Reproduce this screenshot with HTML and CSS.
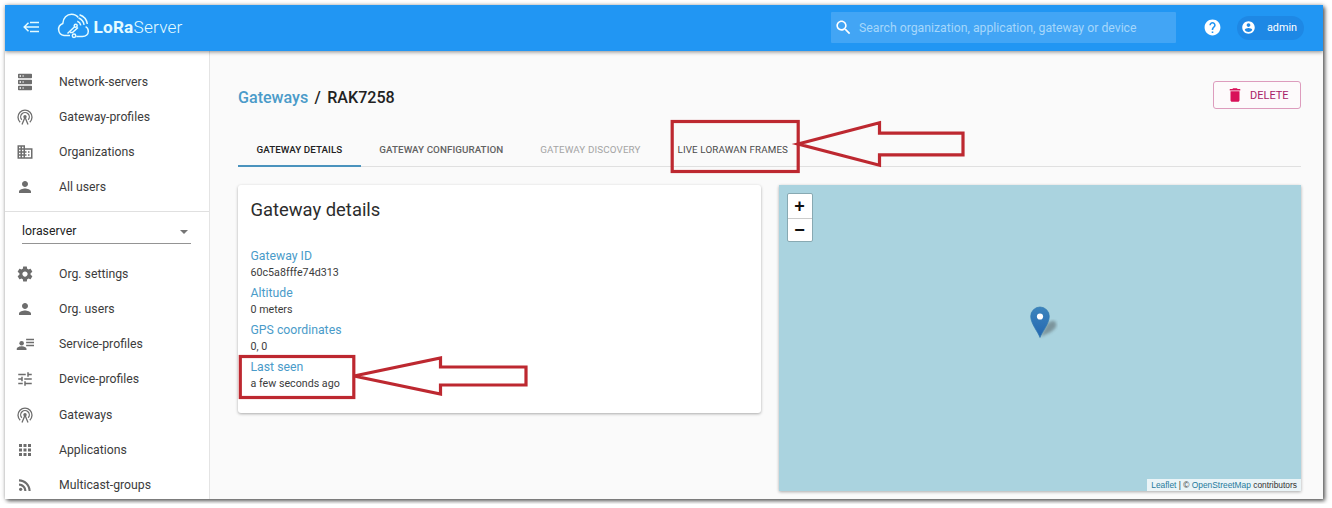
FILE: index.html
```html
<!DOCTYPE html>
<html lang="en">
<head>
<meta charset="utf-8">
<title>LoRa Server</title>
<link rel="stylesheet" href="styles.css">
</head>
<body>
<svg class="defs" width="0" height="0" aria-hidden="true">
  <symbol id="server" viewBox="0 0 18 18"><path fill-rule="evenodd" d="M2.8.7h12.4q.8 0 .8.8v3q0 .8-.8.8H2.800q-.8 0-.8-.8v-3q0-.8.8-.8zM3.600 2.300v1.500h1.400V2.300zM6.600 2.300v1.500h1V2.300zM2.800 6.700h12.400q.8 0 .8.8v3q0 .8-.8.8H2.800q-.8 0-.8-.8v-3q0-.8.8-.8zM3.600 8.300v1.500h1.400V8.300zM6.600 8.300v1.500h1V8.300zM2.800 12.700h12.400q.8 0 .8.8v3q0 .8-.8.8H2.800q-.8 0-.8-.8v-3q0-.8.8-.8zM3.600 14.300v1.500h1.400v-1.500zM6.600 14.300v1.500h1v-1.500z"/></symbol>
  <symbol id="antenna" viewBox="0 0 18 18"><g fill="none" stroke="currentColor" stroke-width="1.300"><path d="M4.200 14.200A7 7 0 1 1 13.800 14.200M5.800 11.800A4.300 4.300 0 1 1 12.200 11.800M6 16.500L9 9.300l3 7.200"/></g><circle cx="9" cy="8.800" r="1.700"/></symbol>
  <symbol id="building" viewBox="0 0 24 24"><path d="M12 7V3H2v18h20V7H12zM6 19H4v-2h2v2zm0-4H4v-2h2v2zm0-4H4V9h2v2zm0-4H4V5h2v2zm4 12H8v-2h2v2zm0-4H8v-2h2v2zm0-4H8V9h2v2zm0-4H8V5h2v2zm10 12h-8v-2h2v-2h-2v-2h2v-2h-2V9h8v10zm-2-8h-2v2h2v-2zm0 4h-2v2h2v-2z"/></symbol>
  <symbol id="person" viewBox="0 0 24 24"><path d="M12 12c2.210 0 4-1.790 4-4s-1.790-4-4-4-4 1.790-4 4 1.790 4 4 4zm0 2c-2.670 0-8 1.340-8 4v2h16v-2c0-2.660-5.330-4-8-4z"/></symbol>
  <symbol id="gear" viewBox="0 0 24 24"><path d="M19.430 12.980c.04-.32.07-.64.07-.98s-.03-.66-.07-.98l2.110-1.650c.19-.15.24-.42.12-.64l-2-3.460c-.12-.22-.39-.3-.61-.22l-2.490 1c-.52-.4-1.080-.73-1.690-.98l-.38-2.650C14.460 2.180 14.250 2 14 2h-4c-.25 0-.46.18-.49.42l-.38 2.650c-.61.25-1.170.59-1.690.98l-2.490-1c-.23-.09-.49 0-.61.22l-2 3.460c-.13.22-.07.49.12.64l2.110 1.650c-.04.32-.07.65-.07.98s.03.66.07.98l-2.110 1.650c-.19.15-.24.42-.12.64l2 3.460c.12.22.39.3.61.22l2.490-1c.52.4 1.080.73 1.690.98l.38 2.650c.03.24.24.42.49.42h4c.25 0 .46-.18.49-.42l.38-2.650c.61-.25 1.170-.59 1.690-.98l2.490 1c.23.09.49 0 .61-.22l2-3.460c.12-.22.07-.49-.12-.64l-2.110-1.650zM12 15.500c-1.930 0-3.500-1.570-3.500-3.500s1.570-3.500 3.500-3.500 3.500 1.570 3.500 3.500-1.570 3.500-3.500 3.500z"/></symbol>
  <symbol id="contact" viewBox="0 0 24 24"><circle cx="7.500" cy="11" r="3"/><path d="M1 20v-1.700c0-2.100 4.300-3.300 6.500-3.300s6.500 1.200 6.500 3.300V20zM13.500 5H24v2H13.500zM13.500 9H24v2H13.500zM13.500 13H24v2H13.500z"/></symbol>
  <symbol id="tune" viewBox="0 0 24 24"><path d="M3 17v2h6v-2H3zM3 5v2h10V5H3zm10 16v-2h8v-2h-8v-2h-2v6h2zM7 9v2H3v2h4v2h2V9H7zm14 4v-2H11v2h10zm-6-4h2V7h4V5h-4V3h-2v6z"/></symbol>
  <symbol id="apps" viewBox="0 0 24 24"><path d="M4 8h4V4H4v4zm6 12h4v-4h-4v4zm-6 0h4v-4H4v4zm0-6h4v-4H4v4zm6 0h4v-4h-4v4zm6-10v4h4V4h-4zm-6 4h4V4h-4v4zm6 6h4v-4h-4v4zm0 6h4v-4h-4v4z"/></symbol>
  <symbol id="feed" viewBox="0 0 24 24"><circle cx="6.180" cy="17.820" r="2.180"/><path d="M4 4.440v2.830c7.030 0 12.730 5.700 12.730 12.730h2.830c0-8.590-6.970-15.560-15.560-15.560zm0 5.660v2.830c3.900 0 7.070 3.170 7.070 7.070h2.830c0-5.470-4.430-9.900-9.900-9.900z"/></symbol>
</svg>

<div class="window">
  <header class="topbar">
    <svg class="collapse" viewBox="0 0 16 12"><path d="M7 1.500h9M5 6h11M7 10.500h9M5.500 1.800L1.200 6l4.300 4.200M1.200 6H7" fill="none" stroke="currentColor" stroke-width="1.500"/></svg>
    <svg class="cloud" viewBox="0 0 34 26" fill="none" stroke="currentColor" stroke-width="1.500">
      <path d="M14 22.500H8A6.200 6.200 0 0 1 6.800 10.500C7 5 11 1.300 15.500 1.300c3 0 5.300 1.200 6.800 3.200M20.300 23.500h6c3.800 0 6-2.400 6-5.200 0-2-1-3.800-2.700-4.700"/>
      <path d="M23.500 1.700c4.400 1.500 7.300 5 7.800 9.300M22.600 5c3 1.200 5 3.400 5.500 6.800M21.300 8.300c2 .7 3.100 2 3.500 4"/>
      <circle cx="19.700" cy="12.700" r="1.500"/><circle cx="18" cy="22.800" r="1.700"/><path d="M18.600 13.800L11.500 20.500M14 19.500h2.500l5.500-5"/>
    </svg>
    <div class="brand"><b>LoRa</b><span>Server</span></div>
    <div class="search">
      <svg viewBox="0 0 24 24"><path d="M15.500 14h-.79l-.28-.27C15.410 12.590 16 11.110 16 9.500 16 5.910 13.090 3 9.500 3S3 5.910 3 9.500 5.910 16 9.500 16c1.610 0 3.090-.59 4.230-1.570l.27.28v.79l5 4.990L20.490 19l-4.990-5zm-6 0C7.010 14 5 11.990 5 9.500S7.010 5 9.500 5 14 7.010 14 9.500 11.990 14 9.500 14z"/></svg>
      <span>Search organization, application, gateway or device</span>
    </div>
    <svg class="help" viewBox="0 0 24 24"><path d="M12 2C6.480 2 2 6.480 2 12s4.480 10 10 10 10-4.480 10-10S17.520 2 12 2zm1 17h-2v-2h2v2zm2.070-7.750l-.9.920C13.450 12.900 13 13.500 13 15h-2v-.5c0-1.100.45-2.100 1.170-2.830l1.240-1.260c.37-.36.59-.86.59-1.410 0-1.100-.9-2-2-2s-2 .9-2 2H8c0-2.210 1.790-4 4-4s4 1.790 4 4c0 .88-.36 1.680-.93 2.250z"/></svg>
    <div class="chip">
      <svg viewBox="0 0 24 24"><path d="M12 2C6.480 2 2 6.480 2 12s4.480 10 10 10 10-4.480 10-10S17.520 2 12 2zm0 3c1.660 0 3 1.340 3 3s-1.340 3-3 3-3-1.340-3-3 1.340-3 3-3zm0 14.200c-2.500 0-4.710-1.280-6-3.220.03-1.990 4-3.080 6-3.080 1.990 0 5.970 1.090 6 3.080-1.290 1.940-3.500 3.220-6 3.220z"/></svg>
      <span>admin</span>
    </div>
  </header>

  <div class="body">
    <nav class="sidebar">
      <div class="group">
        <a><svg><use href="#server"/></svg>Network-servers</a>
        <a><svg><use href="#antenna"/></svg>Gateway-profiles</a>
        <a><svg><use href="#building"/></svg>Organizations</a>
        <a><svg><use href="#person"/></svg>All users</a>
      </div>
      <div class="org"><div class="select"><span>loraserver</span><i></i></div></div>
      <div class="group">
        <a><svg><use href="#gear"/></svg>Org. settings</a>
        <a><svg><use href="#person"/></svg>Org. users</a>
        <a><svg><use href="#contact"/></svg>Service-profiles</a>
        <a><svg><use href="#tune"/></svg>Device-profiles</a>
        <a><svg><use href="#antenna"/></svg>Gateways</a>
        <a><svg><use href="#apps"/></svg>Applications</a>
        <a><svg><use href="#feed"/></svg>Multicast-groups</a>
      </div>
    </nav>

    <main class="content">
      <div class="title-row">
        <h1><a>Gateways</a><span class="slash">/</span><span>RAK7258</span></h1>
        <button class="delete"><svg viewBox="0 0 24 24"><path d="M6 19c0 1.100.9 2 2 2h8c1.100 0 2-.9 2-2V7H6v12zM19 4h-3.500l-1-1h-5l-1 1H5v2h14V4z"/></svg>DELETE</button>
      </div>
      <div class="tabs">
        <span class="tab active">GATEWAY DETAILS</span>
        <span class="tab">GATEWAY CONFIGURATION</span>
        <span class="tab disabled">GATEWAY DISCOVERY</span>
        <span class="tab live">LIVE LORAWAN FRAMES</span>
      </div>
      <div class="panels">
        <section class="card">
          <h2>Gateway details</h2>
          <dl>
            <dt>Gateway ID</dt><dd>60c5a8fffe74d313</dd>
            <dt>Altitude</dt><dd>0 meters</dd>
            <dt>GPS coordinates</dt><dd>0, 0</dd>
            <dt>Last seen</dt><dd>a few seconds ago</dd>
          </dl>
        </section>
        <section class="map">
          <div class="zoom"><span>+</span><span>−</span></div>
          <svg class="pin" viewBox="0 0 44 36">
            <defs>
              <linearGradient id="pinFill" x1="0" y1="0" x2="0" y2="1"><stop offset="0" stop-color="#3c84bd"/><stop offset="1" stop-color="#2467b0"/></linearGradient>
              <filter id="soft"><feGaussianBlur stdDeviation="1.800"/></filter>
            </defs>
            <path d="M11 31L18 18q7-6 9-1t-7 10z" fill="#333" opacity=".38" filter="url(#soft)"/>
            <path d="M11 31.500C9 26 1.700 17.500 1.700 10.300a9.300 9.300 0 0 1 18.600 0C20.300 17.500 13 26 11 31.500z" fill="url(#pinFill)" stroke="#3179b0" stroke-width=".7"/>
            <circle cx="11" cy="10.500" r="3.100" fill="#fff"/>
          </svg>
          <div class="credit"><a>Leaflet</a> | © <a>OpenStreetMap</a> contributors</div>
        </section>
      </div>
    </main>
  </div>
</div>

<svg class="marks" viewBox="0 0 1332 508" fill="none" stroke="#bd2830" stroke-width="3.200">
  <rect x="672.200" y="121.500" width="126" height="50"/>
  <path d="M798 144L879.500 122.800V133.200H963V154.800H879.500V165.200z"/>
  <rect x="240.300" y="356.500" width="113.500" height="41"/>
  <path d="M354 376L440.500 358V367H526V385H440.500V394z"/>
</svg>
</body>
</html>
```

FILE: styles.css
```css
* { box-sizing: border-box; }
body { margin: 0; background: #fff; font-family: Roboto, sans-serif; color: #333; overflow: hidden; }
.defs { position: absolute; }
svg { fill: currentColor; flex: none; }

.window {
  width: 1318px; height: 494px; margin: 5px;
  display: flex; flex-direction: column; overflow: hidden;
  background: #fafafa; box-shadow: 2px 2px 4px rgba(0, 0, 0, .6), 0 0 4px rgba(0, 0, 0, .25);
}

.topbar {
  height: 46px; flex: none; display: flex; align-items: center;
  padding: 0 19px 1px 18px; background: #2196f3; color: #e4fbff;
  box-shadow: 0 1px 4px rgba(0, 0, 0, .45); z-index: 1;
}
.collapse { width: 16px; height: 12px; margin-top: -1px; }
.cloud { width: 34px; height: 26px; margin-left: 17px; margin-top: -3px; fill: none; }
.brand { margin-left: 3.500px; font-size: 17.200px; line-height: 20px; letter-spacing: .2px; padding-bottom: 1px; }
.brand span { font-weight: 300; }
.search {
  width: 345px; height: 31px; margin-left: auto; padding-left: 3px;
  display: flex; align-items: center; gap: 7px;
  background: #42a5f5; border-radius: 1px; color: #a5d7fb; font-size: 12.25px;
}
.search svg { width: 19px; height: 19px; margin-right: -1px; color: #fff; }
.help { width: 19px; height: 19px; margin-left: 27px; margin-right: -1px; color: #fff; }
.chip {
  width: 67px; height: 24px; margin-left: 16px; padding-left: 4px; border-radius: 12px;
  display: flex; align-items: center; gap: 11px; background: #1e88e5; color: #fff; font-size: 10.800px;
}
.chip svg { width: 15px; height: 15px; }

.body { flex: 1; min-height: 0; display: flex; }
.sidebar { width: 205px; flex: none; background: #fff; border-right: 1px solid #e4e4e4; padding-top: 13px; }
.group a {
  height: 35.200px; padding-left: 11px; display: flex; align-items: center; gap: 25px;
  font-size: 12.25px; color: #3c3c3c;
}
.group svg { width: 18px; height: 18px; color: #6d6d6d; }
.org { height: 45.500px; margin-top: 6px; border-top: 1px solid #e0e0e0; padding: 6px 18px 0 17px; }
.select {
  height: 26px; border-bottom: 1px solid #949494; padding: 2px 3px 0 0;
  display: flex; align-items: center; justify-content: space-between; font-size: 12.3px; color: #222;
}
.select i { border: 4px solid transparent; border-top-color: #757575; border-bottom: 0; margin-top: 1px; }

.content { flex: 1; padding: 30px 22px 0 28px; }
.title-row { display: flex; justify-content: space-between; align-items: flex-start; height: 52px; }
h1 { margin: 7px 0 0; font-size: 16.100px; line-height: 20px; font-weight: 500; color: #222; }
h1 a { color: #4a9bc9; }
.slash { margin: 0 6.300px; }
.delete {
  width: 88px; height: 28px; padding: 0 0 0 12px; display: flex; align-items: center; gap: 6px;
  border: 1px solid #dd9cbd; border-radius: 3px; background: #fdfafb;
  color: #a92268; font: 400 11px Roboto, sans-serif;
}
.delete svg { width: 18px; height: 18px; color: #d81159; }
.tabs { height: 34px; display: flex; border-bottom: 1px solid #e0e0e0; }
.tab { height: 34px; padding: 0 18.500px; font-size: 9.800px; line-height: 33px; font-weight: 500; letter-spacing: .06px; color: #626262; white-space: nowrap; }
.active { color: #222; border-bottom: 2px solid #4a93bd; }
.disabled { color: #a4a4a4; font-weight: 400; letter-spacing: .13px; }
.live { color: #4a4a4a; font-weight: 400; letter-spacing: .13px; }

.panels { display: grid; grid-template-columns: 1fr 1fr; gap: 18px; margin-top: 18px; align-items: start; }
.card, .map { box-shadow: 0 1px 3px rgba(0, 0, 0, .32); }
.card { height: 228px; padding: 14px 12.500px; background: #fff; border-radius: 3px; }
h2 { margin: 0 0 26px; font-size: 18.400px; line-height: 22px; font-weight: 400; color: #2c2c2c; }
dl { margin: 0; }
dt { font-size: 12.25px; line-height: 19px; color: #4a9bc9; }
dd { margin: 0; font-size: 10.700px; line-height: 14px; padding-bottom: 4px; height: 18.100px; color: #3c3c3c; }

.map { position: relative; height: 306px; background: #aad3df; }
.zoom {
  position: absolute; left: 8px; top: 8px; width: 26px; height: 49px;
  border: 1px solid #88a9b2; border-radius: 2px; background: #fff; overflow: hidden;
}
.zoom span {
  display: block; height: 24px; font: bold 18px/25px "Liberation Sans", sans-serif; text-align: center; color: #111;
}
.zoom span + span { border-top: 1px solid #ccc; line-height: 23px; }
.pin { position: absolute; left: 250.500px; top: 121px; width: 44px; height: 36px; }
.credit {
  position: absolute; right: 0; bottom: 0; height: 12px; padding: 0 4px;
  background: rgba(255, 255, 255, .75); font: 8.400px/12px "Liberation Sans", sans-serif; white-space: nowrap;
}
.credit a { color: #1f7a9c; }

.marks { position: absolute; left: 0; top: 0; width: 1332px; height: 508px; fill: none; z-index: 2; pointer-events: none; }
```
